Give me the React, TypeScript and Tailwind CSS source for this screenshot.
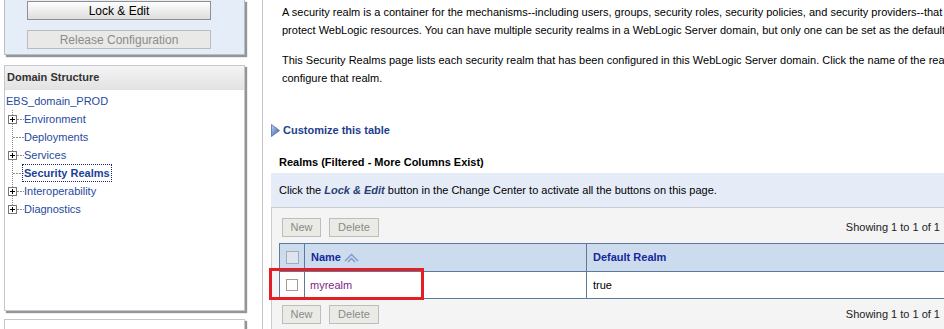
const treeItems = [
  { label: 'Environment', expandable: true },
  { label: 'Deployments', expandable: false },
  { label: 'Services', expandable: true },
  { label: 'Security Realms', expandable: false, active: true },
  { label: 'Interoperability', expandable: true },
  { label: 'Diagnostics', expandable: true },
]

function Connector({ expandable, last }: { expandable: boolean; last: boolean }) {
  return (
    <svg width="19" height="18" className="shrink-0">
      <line x1="7.5" y1="0" x2="7.5" y2={last ? 9 : 18} stroke="#8a8a8a" strokeDasharray="1 1" />
      <line x1={expandable ? 12 : 8} y1="9.5" x2="19" y2="9.5" stroke="#8a8a8a" strokeDasharray="2 1" />
      {expandable && (
        <>
          <rect x="3.5" y="5.5" width="8" height="8" fill="#fff" stroke="#777" />
          <line x1="5" y1="9.5" x2="10" y2="9.5" stroke="#000" />
          <line x1="7.5" y1="7" x2="7.5" y2="12" stroke="#000" />
        </>
      )}
    </svg>
  )
}

function GrayButton({ label, width }: { label: string; width: string }) {
  return (
    <div
      className={`${width} h-[19px] flex items-center justify-center border border-[#bdbdbd] bg-[#ebebe6] text-[#8a8a8a]`}
    >
      {label}
    </div>
  )
}

function Toolbar() {
  return (
    <div className="flex items-center h-[19px]">
      <div className="flex gap-[8px] ml-[3px]">
        <GrayButton label="New" width="w-[39px]" />
        <GrayButton label="Delete" width="w-[50px]" />
      </div>
      <span className="ml-auto mr-[4px] text-[#222]">Showing 1 to 1 of 1</span>
    </div>
  )
}

export default function App() {
  return (
    <div className="w-[944px] h-[329px] overflow-hidden bg-white flex font-['Liberation_Sans',Arial,sans-serif] text-[11px] text-black">
      {/* left column */}
      <aside className="w-[263px] shrink-0 border-r border-[#c4c4c4]">
        <div className="ml-[4px] w-[241px] h-[55px] bg-[#e5edf9] border-l border-b border-r border-[#b8bec8] shadow-[2px_2px_1px_#959595] pt-[1px]">
          <div className="ml-[22px] w-[184px] h-[19px] flex items-center justify-center border border-[#8f8f8f] bg-gradient-to-b from-[#fefefe] to-[#dedede] text-[12px] text-black">
            Lock &amp; Edit
          </div>
          <div className="ml-[22px] mt-[10px] w-[184px] h-[19px] flex items-center justify-center border border-[#bcbcbc] bg-[#e9e9e7] text-[12px] text-[#8c8c8c]">
            Release Configuration
          </div>
        </div>

        <div className="ml-[4px] mt-[10px] w-[241px] h-[246px] bg-white border border-[#c4c8ce] shadow-[2px_2px_1px_#959595]">
          <div className="h-[24px] flex items-center pl-[2px] bg-gradient-to-b from-[#f4f4f4] to-[#e3e3e3] border-b border-[#e0e0e0] font-bold text-[#333]">
            Domain Structure
          </div>
          <div className="pt-[2px] text-[#1f4aa0]">
            <div className="h-[18px] leading-[18px] pl-[1px]">EBS_domain_PROD</div>
            {treeItems.map((item, i) => (
              <div key={item.label} className="h-[18px] flex items-center">
                <Connector expandable={item.expandable} last={i === treeItems.length - 1} />
                {item.active ? (
                  <span className="font-bold text-[#1a3f9a] outline outline-1 outline-dotted outline-[#1a2a6a] leading-[16px] px-[1px] -ml-[1px]">
                    {item.label}
                  </span>
                ) : (
                  <span>{item.label}</span>
                )}
              </div>
            ))}
          </div>
        </div>

        <div className="ml-[4px] mt-[8px] w-[241px] h-[20px] bg-white border border-[#c4c8ce] shadow-[2px_2px_1px_#959595]" />
      </aside>

      {/* content */}
      <main className="flex-1 min-w-0 overflow-hidden">
        <div className="pl-[19px] pt-[3px] leading-[18px] whitespace-nowrap">
          <p>
            A security realm is a container for the mechanisms--including users, groups, security roles, security policies, and security providers--that are used to
            <br />
            protect WebLogic resources. You can have multiple security realms in a WebLogic Server domain, but only one can be set as the default (active) realm.
          </p>
          <p className="mt-[12px]">
            This Security Realms page lists each security realm that has been configured in this WebLogic Server domain. Click the name of the realm to explore and
            <br />
            configure that realm.
          </p>
        </div>

        <div className="ml-[8px] mt-[34px] h-[18px] flex items-center gap-[3px]">
          <svg width="9" height="13" viewBox="0 0 9 13">
            <defs>
              <linearGradient id="tri" x1="0" y1="0" x2="1" y2="1">
                <stop offset="0" stopColor="#c4d4f0" />
                <stop offset="1" stopColor="#2f57a8" />
              </linearGradient>
            </defs>
            <polygon points="0.5,0.5 8.5,6.5 0.5,12.5" fill="url(#tri)" stroke="#4a6cb0" strokeWidth="0.8" />
          </svg>
          <span className="font-bold text-[#1d3e8e]">Customize this table</span>
        </div>

        <div className="ml-[16px] mt-[14px] h-[18px] leading-[18px] font-bold text-black">
          Realms (Filtered - More Columns Exist)
        </div>

        <div className="ml-[8px] mt-[2px] h-[34px] flex items-center pl-[8px] bg-[#e5ecf8] whitespace-nowrap text-black">
          Click the&nbsp;<b className="italic text-[#2a3f70]">Lock &amp; Edit</b>&nbsp;button in the Change Center to activate all the buttons on this page.
        </div>

        <div className="ml-[8px] h-[130px] bg-[#f4f4f4] border-t border-l border-[#c9ccd2] pl-[7px] pt-[10px]">
          <Toolbar />

          <div className="relative mt-[6px]">
            <div className="border-l border-[#5d7a9c]">
              <div className="h-[29px] flex border-y border-[#5d7a9c] bg-[#cddbee] font-bold text-[#13299b]">
                <div className="w-[25px] border-r border-[#5d7a9c] flex items-center">
                  <div className="ml-[6px] w-[13px] h-[13px] border border-[#a3abb8] bg-[#dfe5ee]" />
                </div>
                <div className="w-[282px] border-r border-[#5d7a9c] flex items-center pl-[6px] gap-[3px]">
                  Name
                  <svg width="15" height="10" viewBox="0 0 15 10">
                    <path d="M1 8 L7.5 1.5 L14 8" fill="none" stroke="#7d97c4" strokeWidth="1.3" />
                    <path d="M4 9 L7.5 5.5 L11 9" fill="none" stroke="#7d97c4" strokeWidth="1.3" />
                  </svg>
                </div>
                <div className="flex-1 flex items-center pl-[6px]">Default Realm</div>
              </div>
              <div className="h-[27px] flex border-b border-[#5d7a9c] bg-white">
                <div className="w-[25px] border-r border-[#5d7a9c] flex items-center">
                  <div className="ml-[6px] w-[12px] h-[12px] border border-[#a89c90] bg-white" />
                </div>
                <div className="w-[282px] border-r border-[#5d7a9c] flex items-center pl-[5px] text-[#7e1f86]">
                  myrealm
                </div>
                <div className="flex-1 flex items-center pl-[6px]">true</div>
              </div>
            </div>
            <div className="absolute left-[-10px] top-[25px] w-[155px] h-[32px] border-[3px] border-[#e31e24]" />
          </div>

          <div className="mt-[6px]">
            <Toolbar />
          </div>
        </div>
      </main>
    </div>
  )
}
